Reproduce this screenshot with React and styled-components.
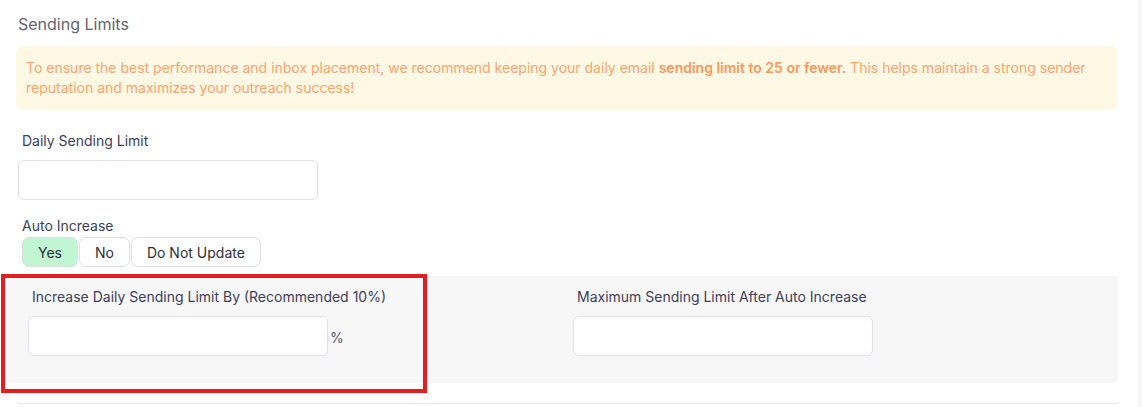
import React from 'react';
import styled, { createGlobalStyle } from 'styled-components';

const GlobalStyle = createGlobalStyle`
  html, body {
    margin: 0;
    padding: 0;
    background: #fff;
  }
  body {
    font-family: Inter, 'Noto Sans', sans-serif;
    -webkit-font-smoothing: antialiased;
  }
`;

const Page = styled.div`
  display: flex;
  width: 1142px;
  height: 407px;
  overflow: hidden;
`;

const Main = styled.div`
  flex: 1;
  padding: 0 20px 0 16px;
`;

const EdgeStrip = styled.div`
  width: 4px;
  background: #f6f6f7;
`;

const Title = styled.h3`
  margin: 0 0 12px;
  padding: 14px 0 0 2px;
  font-size: 16px;
  line-height: 20px;
  font-weight: 400;
  color: #656567;
`;

const Alert = styled.div`
  background: #fff8e5;
  border-radius: 8px;
  padding: 12px 10px;
  font-size: 14px;
  line-height: 20px;
  color: #fba46c;

  strong {
    font-weight: 600;
    color: #f99858;
  }
`;

const Field = styled.div`
  display: flex;
  flex-direction: column;
  padding-left: ${(p) => p.$indent || 0}px;
  margin-top: ${(p) => p.$top || 0}px;
`;

const Label = styled.label`
  padding-left: 4px;
  font-size: 14px;
  line-height: 20px;
  color: #3d4058;
`;

const InputRow = styled.div`
  display: flex;
  align-items: center;
  gap: 2px;
  margin-top: ${(p) => p.$gap ?? 9}px;
`;

const Input = styled.input`
  width: 300px;
  height: 40px;
  box-sizing: border-box;
  border: 1px solid #e2e0ee;
  border-radius: 6px;
  background: #fff;
  padding: 0 10px;
  font-family: inherit;
  font-size: 14px;
  outline: none;
`;

const Unit = styled.span`
  font-size: 14px;
  color: #56586a;
  margin-top: 2px;
`;

const Toggle = styled.div`
  display: flex;
  gap: 1px;
  margin: 1px 0 0 4px;
`;

const ToggleButton = styled.button`
  height: 30px;
  padding: 0 15px;
  border: 1px solid #dedee3;
  border-radius: 7px;
  background: ${(p) => (p.$active ? '#c1f6d3' : '#fff')};
  font-family: inherit;
  font-size: 14px;
  color: #2e2f36;
  cursor: pointer;
`;

const Wrapper = styled.div`
  position: relative;
  margin: 9px 0 0 -8px;
`;

const GreySection = styled.div`
  display: grid;
  grid-template-columns: 545px 1fr;
  background: #f7f7f8;
  padding: 11px 0 27px 20px;
`;

const Highlight = styled.div`
  position: absolute;
  left: -7px;
  top: -2px;
  width: 426px;
  height: 119px;
  box-sizing: border-box;
  border: 4px solid #e41d22;
  pointer-events: none;
`;

const Divider = styled.hr`
  margin: 20px 0 0 2px;
  border: 0;
  border-top: 1.5px solid #e4e4e9;
`;

const App = () => {
  return (
    <>
      <GlobalStyle />
      <Page>
        <Main>
          <Title>Sending Limits</Title>
          <Alert>
            To ensure the best performance and inbox placement, we recommend keeping your daily
            email <strong>sending limit to 25 or fewer.</strong> This helps maintain a strong
            sender reputation and maximizes your outreach success!
          </Alert>

          <Field $indent={2} $top={21}>
            <Label>Daily Sending Limit</Label>
            <InputRow $gap={9}>
              <Input type="text" />
            </InputRow>
          </Field>

          <Field $indent={2} $top={16}>
            <Label>Auto Increase</Label>
            <Toggle>
              <ToggleButton $active>Yes</ToggleButton>
              <ToggleButton>No</ToggleButton>
              <ToggleButton>Do Not Update</ToggleButton>
            </Toggle>
          </Field>

          <Wrapper>
            <GreySection>
              <Field>
                <Label>Increase Daily Sending Limit By (Recommended 10%)</Label>
                <InputRow>
                  <Input type="text" />
                  <Unit>%</Unit>
                </InputRow>
              </Field>
              <Field>
                <Label>Maximum Sending Limit After Auto Increase</Label>
                <InputRow>
                  <Input type="text" />
                </InputRow>
              </Field>
            </GreySection>
            <Highlight />
          </Wrapper>

          <Divider />
        </Main>
        <EdgeStrip />
      </Page>
    </>
  );
};

export default App;
